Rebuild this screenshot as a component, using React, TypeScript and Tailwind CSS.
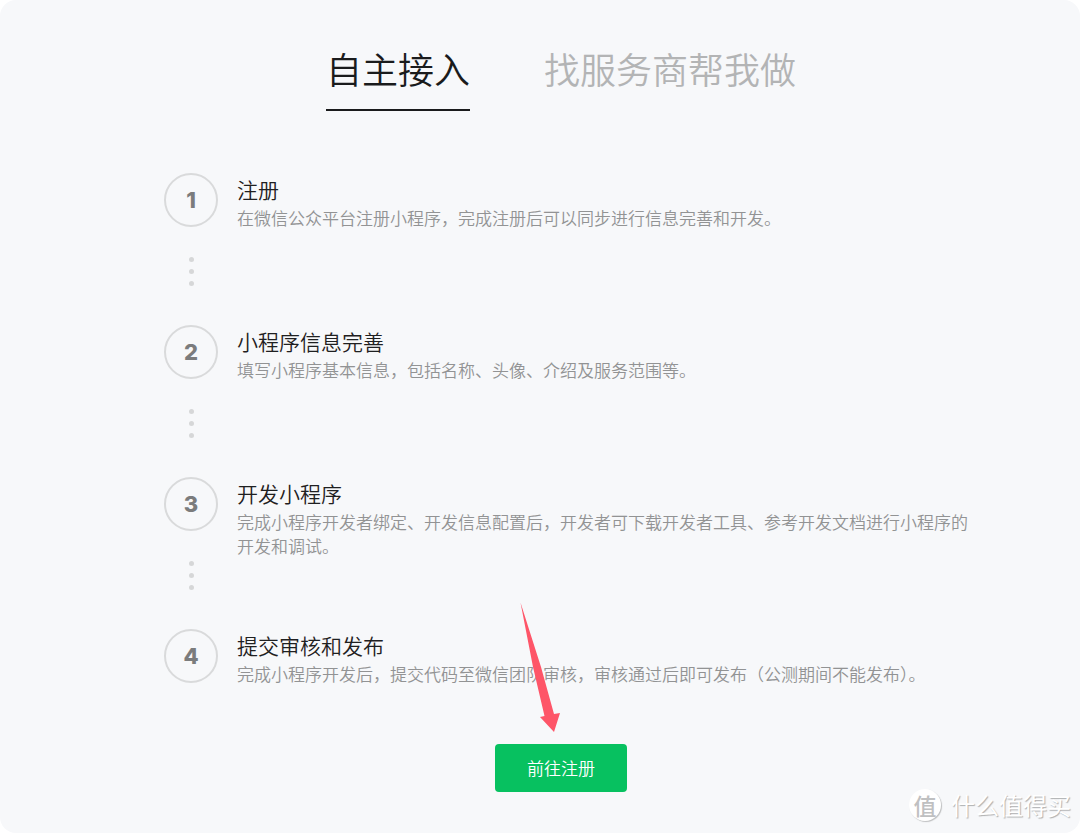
import { useState } from "react";
import clsx from "clsx";

interface Step {
	title: string;
	desc: string;
}

interface StepItemProps {
	index: number;
	step: Step;
	isLast: boolean;
}

const tabs = ["自主接入", "找服务商帮我做"];

const steps: Step[] = [
	{
		title: "注册",
		desc: "在微信公众平台注册小程序，完成注册后可以同步进行信息完善和开发。",
	},
	{
		title: "小程序信息完善",
		desc: "填写小程序基本信息，包括名称、头像、介绍及服务范围等。",
	},
	{
		title: "开发小程序",
		desc: "完成小程序开发者绑定、开发信息配置后，开发者可下载开发者工具、参考开发文档进行小程序的开发和调试。",
	},
	{
		title: "提交审核和发布",
		desc: "完成小程序开发后，提交代码至微信团队审核，审核通过后即可发布（公测期间不能发布）。",
	},
];

const StepItem = ({ index, step, isLast }: StepItemProps) => (
	<li className={clsx("flex gap-[19px]", !isLast && "min-h-[152px]")}>
		<div className="flex shrink-0 flex-col items-center">
			<span className="flex size-[54px] items-center justify-center rounded-full border-2 border-[#d9dadb] font-['Inter',sans-serif] text-[22px] font-extrabold text-[#7b7c7d]">
				{index + 1}
			</span>
			{!isLast && (
				<div className="mt-[30px] flex flex-col gap-[7px]">
					<i className="size-[5px] rounded-full bg-[#d6d7d8]" />
					<i className="size-[5px] rounded-full bg-[#d6d7d8]" />
					<i className="size-[5px] rounded-full bg-[#d6d7d8]" />
				</div>
			)}
		</div>
		<div className="min-w-0 flex-1">
			<h3 className="text-[21px] leading-8 text-[#1f2021]">{step.title}</h3>
			<p className="mt-px text-[17px] leading-6 text-[#929394]">{step.desc}</p>
		</div>
	</li>
);

const App = () => {
	const [activeTab, setActiveTab] = useState(0);

	return (
		<div className="bg-white">
			<main className="relative min-h-screen overflow-hidden rounded-2xl bg-[#f7f8fa] font-['Noto_Sans_CJK_SC',sans-serif] font-[350]">
				<div role="tablist" className="flex justify-center gap-[74px] pt-[41px] pl-[42px]">
					{tabs.map((tab, i) => (
						<button
							key={tab}
							type="button"
							role="tab"
							aria-selected={activeTab === i}
							onClick={() => setActiveTab(i)}
							className={clsx(
								"border-b-2 pb-3.5 text-[36px] leading-[54px]",
								activeTab === i
									? "border-[#1a1b1c] text-[#1a1b1c]"
									: "border-transparent text-[#b3b4b5]",
							)}
						>
							{tab}
						</button>
					))}
				</div>

				<ol className="mt-[62px] pr-[100px] pl-[164px]">
					{steps.map((step, i) => (
						<StepItem
							key={step.title}
							index={i}
							step={step}
							isLast={i === steps.length - 1}
						/>
					))}
				</ol>

				<div className="mt-[58px] flex justify-center pb-10 pl-[42px]">
					<div className="relative">
						<button
							type="button"
							className="h-12 rounded bg-[#07c160] px-8 text-[17px] text-white"
						>
							前往注册
						</button>
						<svg
							className="pointer-events-none absolute bottom-[60px] left-[25px] h-[130px] w-10"
							viewBox="0 0 40 130"
							fill="#fe5568"
							aria-hidden="true"
						>
							<path d="M0.5 0.5L21 65L34 112L40 111L34 130L20 115L24.5 114L13 65Z" />
						</svg>
					</div>
				</div>

				<div className="absolute right-[9px] bottom-2.5 flex items-center gap-2.5">
					<span className="flex size-8 items-center justify-center rounded-full bg-white text-[23px] leading-8 font-medium text-[#bfc0c1] shadow-[1px_1px_1px_#bfc0c1]">
						<span>值</span>
					</span>
					<span className="text-[24px] leading-9 font-normal text-white [text-shadow:1px_1px_1px_#aeafb0]">
						什么值得买
					</span>
				</div>
			</main>
		</div>
	);
};

export default App;
